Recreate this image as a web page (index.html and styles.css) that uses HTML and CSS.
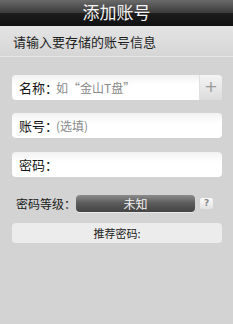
FILE: index.html
```html
<!DOCTYPE html>
<html lang="zh">
<head>
  <meta charset="UTF-8">
  <meta name="viewport" content="width=device-width, initial-scale=1.0">
  <title>添加账号</title>
  <link rel="stylesheet" href="styles.css">
</head>
<body>
  <header class="topbar">添加账号</header>
  <div class="subtitle">请输入要存储的账号信息</div>

  <div class="form">
    <div class="field">
      <span class="label">名称：</span>
      <span class="hint">如“金山T盘”</span>
      <span class="add">+</span>
    </div>
    <div class="field">
      <span class="label">账号：</span>
      <span class="hint">(选填)</span>
    </div>
    <div class="field">
      <span class="label">密码：</span>
    </div>

    <div class="level-row">
      <span class="level-label">密码等级：</span>
      <div class="level-bar">未知</div>
      <span class="help">?</span>
    </div>

    <div class="suggest">推荐密码:</div>
  </div>
</body>
</html>
```

FILE: styles.css
```css
body {
  margin: 0;
  background: #d3d3d3;
  font-family: "Noto Sans CJK SC", "Noto Sans", sans-serif;
  color: #222;
}

.topbar {
  height: 26px;
  line-height: 24px;
  text-align: center;
  color: #f4f4f4;
  font-size: 17px;
  background: linear-gradient(#6a6a6a, #3a3a3a 50%, #1c1c1c 52%, #111);
}

.subtitle {
  height: 31px;
  line-height: 32px;
  padding-left: 13px;
  font-size: 13px;
  color: #1e1e1e;
  background: linear-gradient(#e4e4e4, #d6d6d6);
  border-bottom: 1px solid #e6e6e6;
  box-sizing: border-box;
}

.form {
  padding: 18px 11px 0 12px;
}

.field {
  height: 25px;
  display: flex;
  align-items: center;
  background: linear-gradient(#f2f2f2, #fff 40%);
  border-radius: 4px;
  padding-left: 7px;
  margin-bottom: 13px;
  overflow: hidden;
}

.field:nth-child(2) {
  margin-bottom: 14px;
}

.label {
  font-size: 13px;
  color: #151515;
}

.hint {
  font-size: 12px;
  color: #8a8a8a;
  margin-left: -2px;
}

.add {
  margin-left: auto;
  width: 22px;
  height: 25px;
  line-height: 24px;
  text-align: center;
  color: #999;
  font-size: 16px;
  font-family: "DejaVu Sans", sans-serif;
  background: linear-gradient(#f4f4f4, #dcdcdc);
  border-left: 1px solid #e0e0e0;
}

.level-row {
  display: flex;
  align-items: center;
  height: 17px;
  margin-top: 18px;
  padding-left: 4px;
}

.level-label {
  flex: none;
  width: 60px;
  white-space: nowrap;
  font-size: 12px;
  color: #1a1a1a;
}

.level-bar {
  width: 119px;
  height: 17px;
  line-height: 17px;
  text-align: center;
  color: #f2f2f2;
  font-size: 12px;
  border-radius: 4px;
  background: linear-gradient(#8c8c8c, #5a5a5a 50%, #444);
  box-shadow: 0 1px 0 #e8e8e8;
}

.help {
  width: 13px;
  height: 11px;
  line-height: 11px;
  margin-left: 5px;
  text-align: center;
  font-size: 9px;
  font-weight: bold;
  color: #888;
  font-family: "DejaVu Sans", sans-serif;
  background: linear-gradient(#fafafa, #e2e2e2);
  border-radius: 2px;
}

.suggest {
  margin-top: 11px;
  height: 20px;
  line-height: 20px;
  text-align: center;
  font-size: 11px;
  color: #222;
  background: #ececec;
  border-radius: 4px;
}
```
